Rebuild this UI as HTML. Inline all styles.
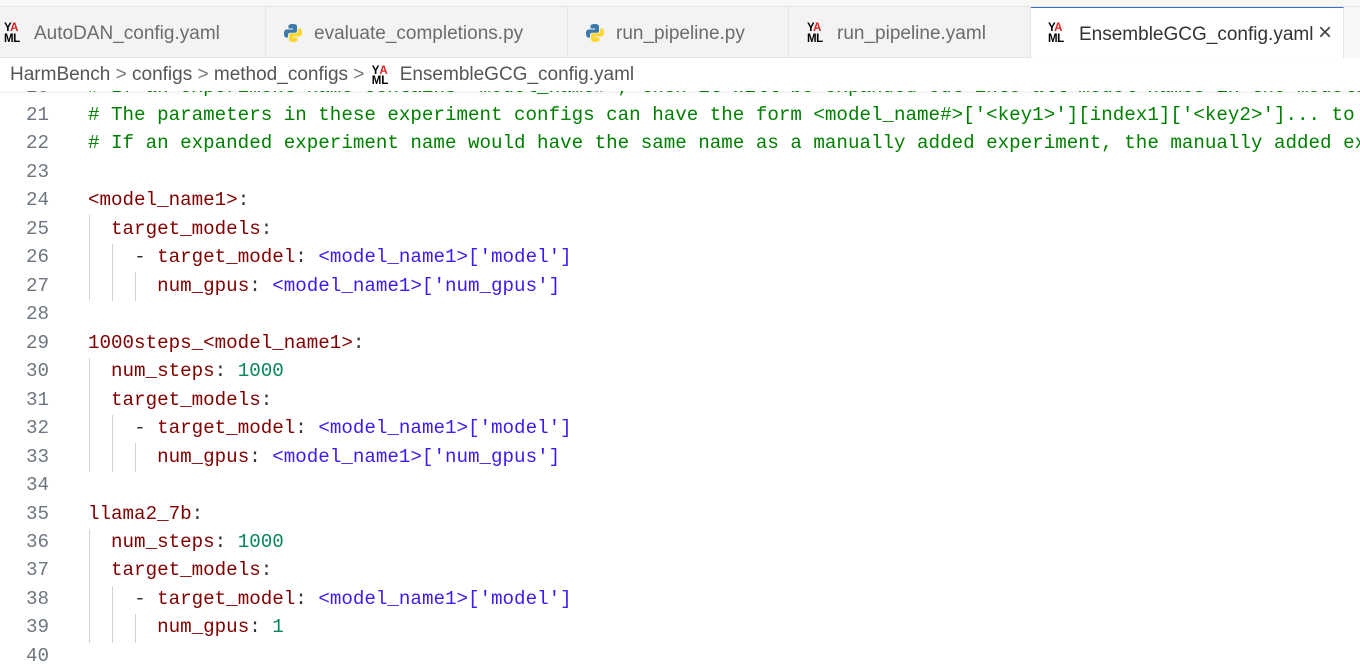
<!DOCTYPE html>
<html><head><meta charset="utf-8"><style>
*{margin:0;padding:0;box-sizing:border-box}
body{width:1360px;height:661px;overflow:hidden;background:#fff;position:relative;font-family:"Liberation Sans",sans-serif}
.tabbar{position:absolute;left:0;top:0;width:1360px;height:58px;background:#f8f8f8;border-top:6px solid #f8f8f8}
.tabbar:before{content:"";position:absolute;left:0;right:0;top:0;height:1px;background:#e5e5e5}
.tab{position:absolute;top:1px;height:51px;background:#f3f3f3;border-right:1px solid #e5e5e5;border-bottom:1px solid #e5e5e5;font-size:19px;color:#6c6c6c;line-height:53px;white-space:nowrap}
.tab.act{background:#fff;color:#333;border-top:1px solid #3a6fd1;border-bottom:none;height:52px}
.tab .lbl{position:absolute;top:0}
.y{position:absolute;top:16px;width:22px;height:24px;font:bold 11.5px/10.5px "Liberation Sans",sans-serif;color:#000;letter-spacing:-0.5px}
.y b{color:#d22;font-weight:bold}
.py{position:absolute;top:16px}
.bc{position:absolute;left:0;top:58px;width:1360px;height:33px;background:#fff;font-size:19px;color:#555;line-height:34px;padding-left:10px;z-index:5;box-shadow:0 2px 3px rgba(0,0,0,0.06);white-space:nowrap}
.code{position:absolute;left:0;top:72.5px;width:1360px;overflow:hidden;font:19.2px/28.47px "Liberation Mono",monospace;white-space:pre}
.ln{display:inline-block;width:49px;text-align:right;color:#6e7681;margin-right:39px}
.c{color:#008000}.k{color:#800000}.v{color:#3a1cf0}.n{color:#098658}.p{color:#333}
.g{position:absolute;width:1px;background:#d3d3d3;z-index:2}
</style></head><body>
<div class="tabbar">
 <div class="tab" style="left:0;width:266px"><div class="y" style="left:4px">Y<b>A</b><br>ML</div><span class="lbl" style="left:34px">AutoDAN_config.yaml</span></div>
 <div class="tab" style="left:266px;width:302px"><svg class="py" style="left:17px" width="20" height="20" viewBox="0 0 20 20"><path d="M10 1C5 1 5.5 3 5.5 3v2.5H10v1H3.5S1 6.2 1 10.5 3.2 14.5 3.2 14.5H5V12s0-2.2 2.3-2.2H12S14 9.8 14 7.8V3.5S14.3 1 10 1z" fill="#3c78aa"/><path d="M10 19c5 0 4.5-2 4.5-2v-2.5H10v-1h6.5S19 13.8 19 9.5 16.8 5.5 16.8 5.5H15V8s0 2.2-2.3 2.2H8S6 10.2 6 12.2v4.3S5.7 19 10 19z" fill="#fdd835"/></svg><span class="lbl" style="left:48px">evaluate_completions.py</span></div>
 <div class="tab" style="left:568px;width:221px"><svg class="py" style="left:17px" width="20" height="20" viewBox="0 0 20 20"><path d="M10 1C5 1 5.5 3 5.5 3v2.5H10v1H3.5S1 6.2 1 10.5 3.2 14.5 3.2 14.5H5V12s0-2.2 2.3-2.2H12S14 9.8 14 7.8V3.5S14.3 1 10 1z" fill="#3c78aa"/><path d="M10 19c5 0 4.5-2 4.5-2v-2.5H10v-1h6.5S19 13.8 19 9.5 16.8 5.5 16.8 5.5H15V8s0 2.2-2.3 2.2H8S6 10.2 6 12.2v4.3S5.7 19 10 19z" fill="#fdd835"/></svg><span class="lbl" style="left:48px">run_pipeline.py</span></div>
 <div class="tab" style="left:789px;width:242px"><div class="y" style="left:18px">Y<b>A</b><br>ML</div><span class="lbl" style="left:48px">run_pipeline.yaml</span></div>
 <div class="tab act" style="left:1031px;width:313px"><div class="y" style="left:17px;top:15px">Y<b>A</b><br>ML</div><span class="lbl" style="left:48px">EnsembleGCG_config.yaml</span><span class="lbl" style="left:287px;color:#444;font-size:24px;top:-2px">×</span></div>
</div>
<div class="bc">HarmBench <span style="color:#777">&gt;</span> configs <span style="color:#777">&gt;</span> method_configs <span style="color:#777">&gt;</span> <span style="display:inline-block;width:22px;font:bold 11.5px/10.5px 'Liberation Sans',sans-serif;color:#000;vertical-align:-4px;margin:0 6px 0 2px">Y<b style="color:#d22">A</b><br>ML</span>EnsembleGCG_config.yaml</div>
<div class="code"><div><span class="ln">20</span><span class="c"># If an experiment name contains &lt;model_name#&gt;, then it will be expanded out into all model names in the models.yaml</span></div><div><span class="ln">21</span><span class="c"># The parameters in these experiment configs can have the form &lt;model_name#&gt;['&lt;key1&gt;'][index1]['&lt;key2&gt;']... to reference</span></div><div><span class="ln">22</span><span class="c"># If an expanded experiment name would have the same name as a manually added experiment, the manually added experiment</span></div><div><span class="ln">23</span></div><div><span class="ln">24</span><span class="k">&lt;model_name1&gt;</span><span class="p">:</span></div><div><span class="ln">25</span>  <span class="k">target_models</span><span class="p">:</span></div><div><span class="ln">26</span>    <span class="p">-</span> <span class="k">target_model</span><span class="p">:</span> <span class="v">&lt;model_name1&gt;['model']</span></div><div><span class="ln">27</span>      <span class="k">num_gpus</span><span class="p">:</span> <span class="v">&lt;model_name1&gt;['num_gpus']</span></div><div><span class="ln">28</span></div><div><span class="ln">29</span><span class="k">1000steps_&lt;model_name1&gt;</span><span class="p">:</span></div><div><span class="ln">30</span>  <span class="k">num_steps</span><span class="p">:</span> <span class="n">1000</span></div><div><span class="ln">31</span>  <span class="k">target_models</span><span class="p">:</span></div><div><span class="ln">32</span>    <span class="p">-</span> <span class="k">target_model</span><span class="p">:</span> <span class="v">&lt;model_name1&gt;['model']</span></div><div><span class="ln">33</span>      <span class="k">num_gpus</span><span class="p">:</span> <span class="v">&lt;model_name1&gt;['num_gpus']</span></div><div><span class="ln">34</span></div><div><span class="ln">35</span><span class="k">llama2_7b</span><span class="p">:</span></div><div><span class="ln">36</span>  <span class="k">num_steps</span><span class="p">:</span> <span class="n">1000</span></div><div><span class="ln">37</span>  <span class="k">target_models</span><span class="p">:</span></div><div><span class="ln">38</span>    <span class="p">-</span> <span class="k">target_model</span><span class="p">:</span> <span class="v">&lt;model_name1&gt;['model']</span></div><div><span class="ln">39</span>      <span class="k">num_gpus</span><span class="p">:</span> <span class="n">1</span></div><div><span class="ln">40</span></div></div>
<div class="g" style="left:89px;top:215px;height:85px"></div>
<div class="g" style="left:112px;top:244px;height:57px"></div>
<div class="g" style="left:135px;top:272px;height:29px"></div>
<div class="g" style="left:89px;top:358px;height:114px"></div>
<div class="g" style="left:112px;top:415px;height:57px"></div>
<div class="g" style="left:135px;top:443px;height:29px"></div>
<div class="g" style="left:89px;top:529px;height:114px"></div>
<div class="g" style="left:112px;top:586px;height:57px"></div>
<div class="g" style="left:135px;top:614px;height:29px"></div>
</body></html>
